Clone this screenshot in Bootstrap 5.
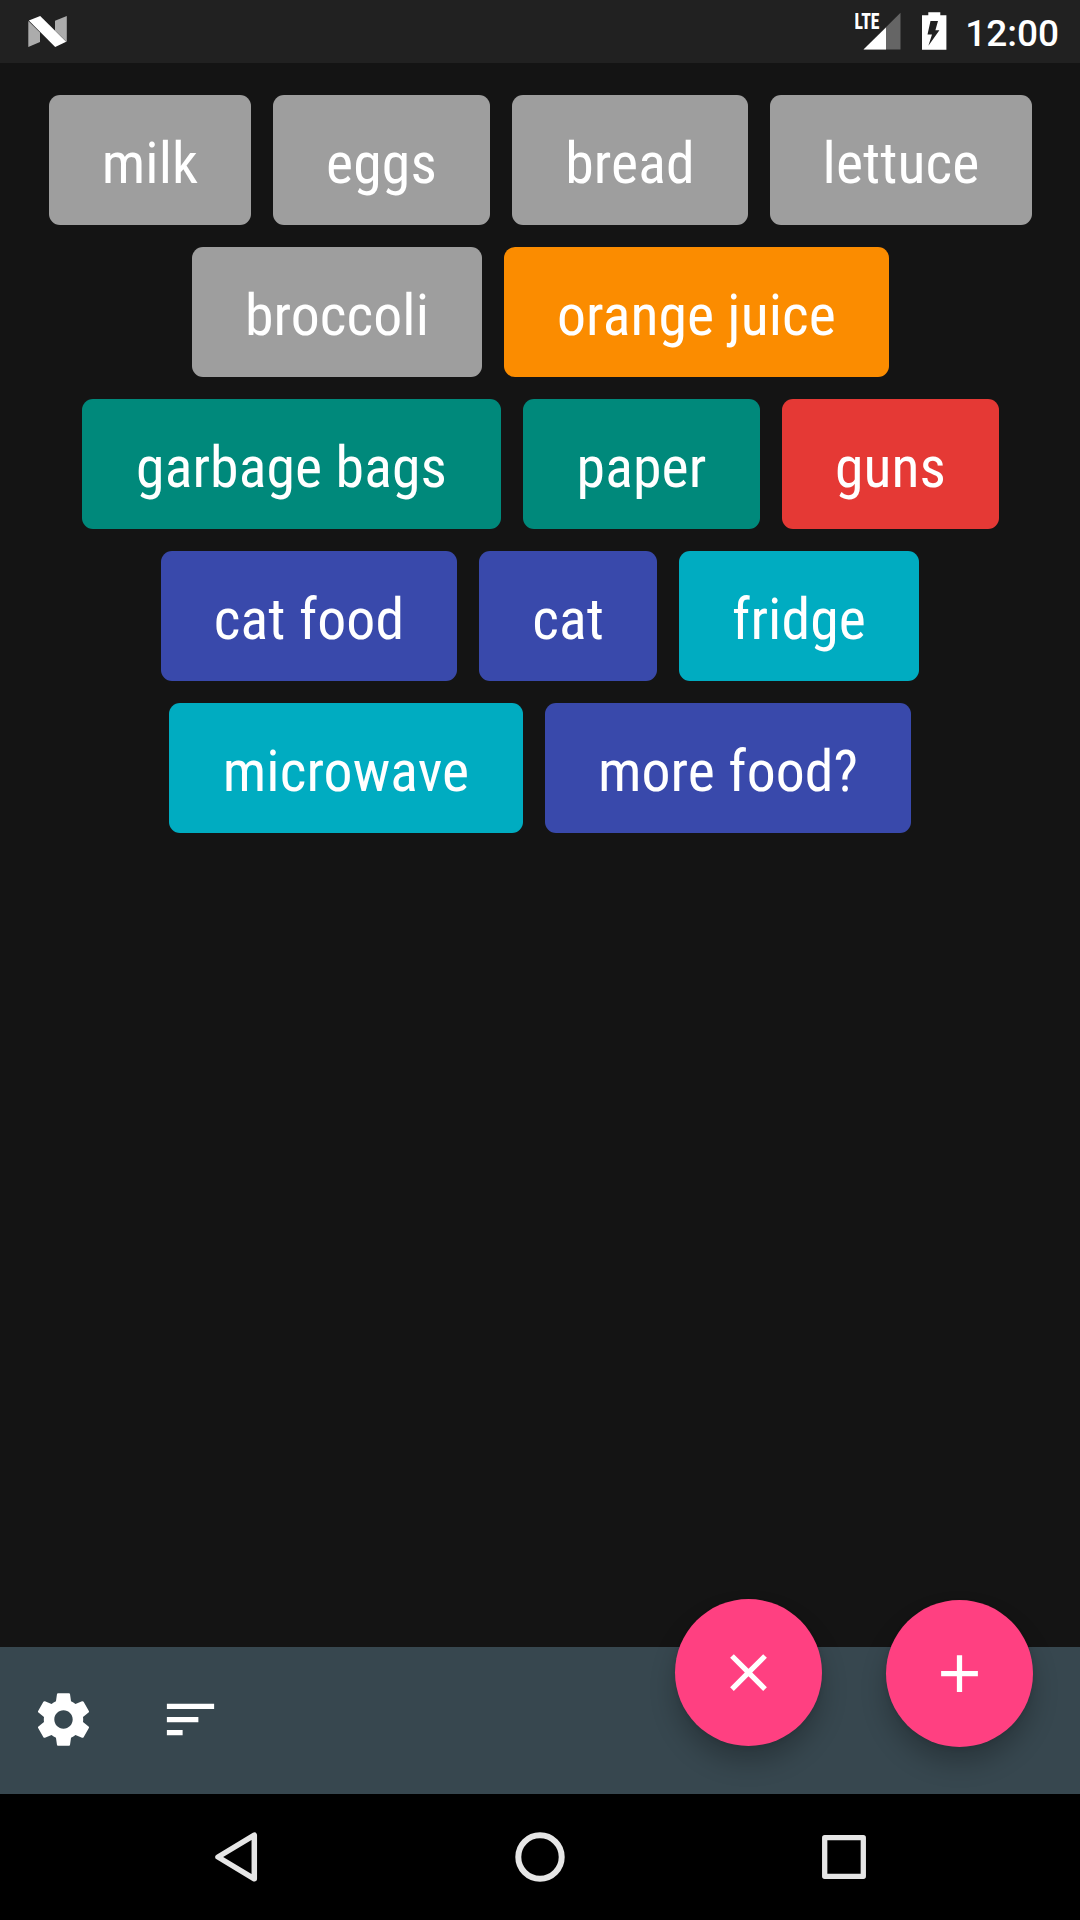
<!DOCTYPE html>
<html lang="en">
<head>
<meta charset="utf-8">
<meta name="viewport" content="width=device-width, initial-scale=1">
<title>Shopping list</title>
<link rel="stylesheet" href="https://cdn.jsdelivr.net/npm/bootstrap@5.3.0/dist/css/bootstrap.min.css">
<style>
  body { background: #141414; font-family: Roboto, sans-serif; color: #fff; }
  .screen { width: 1080px; height: 1920px; }
  .status-bar { height: 63px; background: #212121; padding: 0 21px 0 28px; }
  .status-bar svg { display: block; }
  .clock { font-size: 37px; font-weight: 500; line-height: 63px; margin-left: 18px; padding-top: 2px; }
  .lte { font-family: "Roboto Condensed", Roboto, sans-serif; font-size: 22.5px; font-weight: 800; font-stretch: 75%; }
  .chips { padding-top: 32px; gap: 22px; }
  .chip-line { gap: 22px; }
  .chip-line.odd-fit { padding-left: 1px; }
  .chip { height: 130px; padding: 7px 0 0; border: 0; border-radius: 11px; color: #fff; font-family: "Roboto Condensed", Roboto, sans-serif; font-stretch: 75%; font-size: 57.75px; line-height: 123px; letter-spacing: .1px; white-space: nowrap; }
  .tone-done { background: #9e9e9e; }
  .tone-orange { background: #fb8c00; }
  .tone-teal { background: #00897b; }
  .tone-red { background: #e53935; }
  .tone-indigo { background: #3949ab; }
  .tone-cyan { background: #00acc1; }
  .tool-bar { height: 147px; background: #37474f; padding: 0 47px 0 32px; }
  .tool-btn { width: 63px; height: 63px; margin: 0 64px 2px 0; }
  .fab { width: 147px; height: 147px; background: #ff4081; margin-top: -48px; box-shadow: 0 16px 26px rgba(0,0,0,.24), 0 2px 5px rgba(0,0,0,.08); }
  .fab + .fab { margin-left: 64px; margin-top: -47px; }
  .nav-keys { height: 126px; background: #000; }
</style>
<script src="https://cdn.jsdelivr.net/npm/bootstrap@5.3.0/dist/js/bootstrap.bundle.min.js"></script>
</head>
<body>
<div class="screen d-flex flex-column overflow-hidden">
  <header class="status-bar d-flex flex-shrink-0">
    <svg class="me-auto" width="39" height="63" viewBox="28 0 39 63" aria-hidden="true">
      <path fill="#acacac" d="M28.300 21l11.700 11.500v9.500l-11.700 5zM66.800 16v26L55 30.500v-9.700z"/>
      <path fill="#fff" d="M28.800 20.400L40.200 16l26 25.800L55.200 47z"/>
    </svg>
    <svg width="92" height="63" viewBox="855 0 92 63">
      <path fill="#656565" d="M900.500 12.800V49.500H863.500z"/>
      <path fill="#fff" d="M886 27.500V49.500H863.500z"/>
      <path fill="#212121" d="M855 12h25v18.500H855z"/>
      <text class="lte" x="854.500" y="29.300" fill="#fff" textLength="25" lengthAdjust="spacingAndGlyphs">LTE</text>
      <path fill="#fff" d="M928.300 12.300h12v2.900h6.100v34.500h-24.400V15.200h6.300z"/>
      <path fill="#212121" d="M930.500 21h7.500l-2.600 9.300h4l-11 15.500 3.600-11.300h-4.500z"/>
    </svg>
    <div class="clock">12:00</div>
  </header>

  <main class="chips flex-grow-1 d-flex flex-column">
    <div class="chip-line odd-fit d-flex justify-content-center">
      <button class="chip tone-done" style="width:202px">milk</button>
      <button class="chip tone-done" style="width:217px">eggs</button>
      <button class="chip tone-done" style="width:236px">bread</button>
      <button class="chip tone-done" style="width:262px">lettuce</button>
    </div>
    <div class="chip-line odd-fit d-flex justify-content-center">
      <button class="chip tone-done" style="width:290px">broccoli</button>
      <button class="chip tone-orange" style="width:385px">orange juice</button>
    </div>
    <div class="chip-line odd-fit d-flex justify-content-center">
      <button class="chip tone-teal" style="width:419px">garbage bags</button>
      <button class="chip tone-teal" style="width:237px">paper</button>
      <button class="chip tone-red" style="width:217px">guns</button>
    </div>
    <div class="chip-line d-flex justify-content-center">
      <button class="chip tone-indigo" style="width:296px">cat food</button>
      <button class="chip tone-indigo" style="width:178px">cat</button>
      <button class="chip tone-cyan" style="width:240px">fridge</button>
    </div>
    <div class="chip-line d-flex justify-content-center">
      <button class="chip tone-cyan" style="width:354px">microwave</button>
      <button class="chip tone-indigo" style="width:366px">more food?</button>
    </div>
  </main>

  <div class="tool-bar d-flex flex-shrink-0 align-items-start">
    <button class="tool-btn btn p-0 border-0 align-self-center d-flex" aria-label="Settings">
      <svg width="63" height="63" viewBox="0 0 24 24" fill="#fff"><path d="M19.430 12.980c.040-.320.070-.640.070-.980s-.030-.660-.070-.980l2.110-1.650c.190-.150.240-.420.120-.640l-2-3.460c-.120-.220-.390-.300-.610-.220l-2.490 1c-.520-.400-1.080-.730-1.690-.980l-.380-2.650C14.460 2.180 14.250 2 14 2h-4c-.250 0-.460.180-.490.420l-.380 2.650c-.610.250-1.170.590-1.690.980l-2.490-1c-.230-.090-.490 0-.610.220l-2 3.460c-.130.220-.070.490.120.640l2.110 1.650c-.040.320-.070.650-.070.980s.030.660.070.980l-2.110 1.650c-.190.150-.240.420-.120.640l2 3.460c.120.220.390.300.610.220l2.490-1c.520.400 1.080.730 1.690.980l.380 2.650c.030.240.240.420.490.420h4c.250 0 .460-.180.490-.420l.380-2.650c.610-.250 1.170-.590 1.690-.980l2.490 1c.230.090.490 0 .610-.220l2-3.460c.120-.220.070-.490-.120-.640l-2.110-1.650zM12 15.500c-1.930 0-3.500-1.570-3.500-3.500s1.570-3.500 3.500-3.500 3.500 1.570 3.500 3.500-1.570 3.500-3.500 3.500z"/></svg>
    </button>
    <button class="tool-btn btn p-0 border-0 align-self-center d-flex me-auto" aria-label="Sort">
      <svg width="63" height="63" viewBox="0 0 24 24" fill="#fff"><path d="M3 18h6v-2H3v2zM3 6v2h18V6H3zm0 7h12v-2H3v2z"/></svg>
    </button>
    <button class="fab btn rounded-circle border-0 p-0 d-flex align-items-center justify-content-center" aria-label="Clear">
      <svg width="63" height="63" viewBox="0 0 24 24" fill="#fff"><path d="M19 6.410L17.590 5 12 10.590 6.410 5 5 6.410 10.590 12 5 17.590 6.410 19 12 13.410 17.590 19 19 17.590 13.410 12z"/></svg>
    </button>
    <button class="fab btn rounded-circle border-0 p-0 d-flex align-items-center justify-content-center" aria-label="Add">
      <svg width="63" height="63" viewBox="0 0 24 24" fill="#fff"><path d="M19 13h-6v6h-2v-6H5v-2h6V5h2v6h6v2z"/></svg>
    </button>
  </div>

  <footer class="nav-keys flex-shrink-0 position-relative d-flex justify-content-center">
    <svg width="1080" height="126" fill="none" stroke="#e6e6e6" stroke-linejoin="round" aria-hidden="true">
      <path stroke-width="5.500" d="M254.300 41.200V84.800L218 63z"/>
      <circle cx="540" cy="63" r="21.700" stroke-width="6"/>
      <rect x="824.700" y="43.700" width="38.600" height="38.600" stroke-width="5.300"/>
    </svg>
  </footer>
</div>
</body>
</html>
